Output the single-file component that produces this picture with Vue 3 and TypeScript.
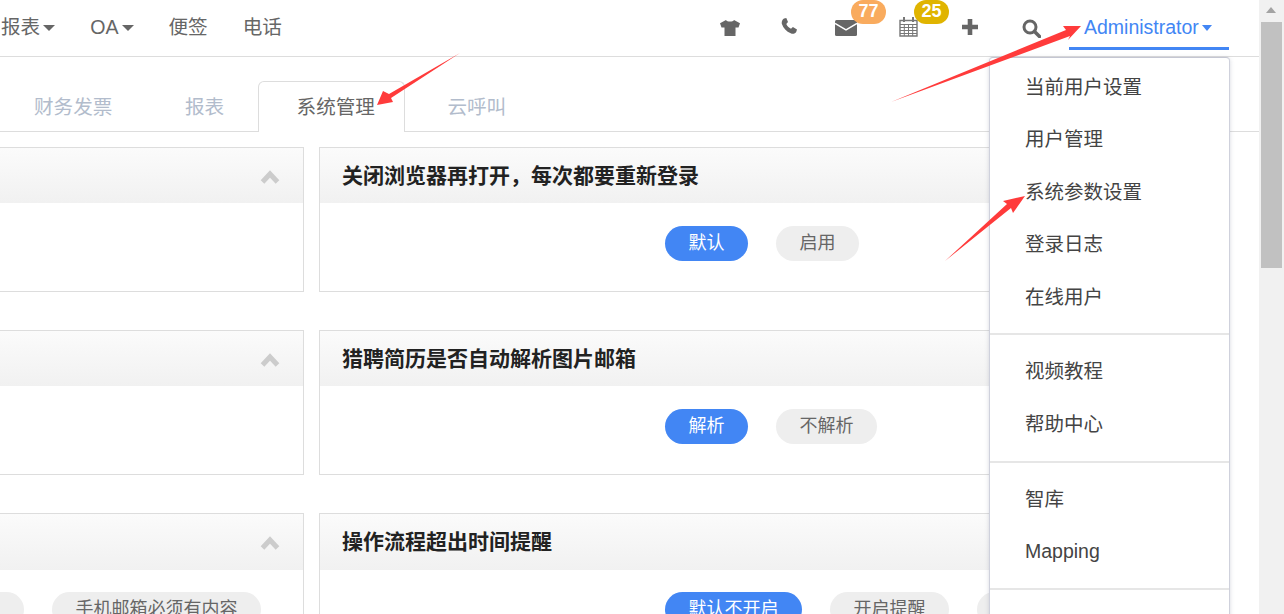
<script setup lang="ts">
interface Pill { text: string; active?: boolean }
interface Panel { title: string; pills: Pill[]; side: 'left' | 'right' }

const navLeft: { text: string; caret: boolean }[] = [
  { text: '报表', caret: true },
  { text: 'OA', caret: true },
  { text: '便签', caret: false },
  { text: '电话', caret: false },
]
const tabs: { text: string; active?: boolean }[] = [
  { text: '财务发票' },
  { text: '报表' },
  { text: '系统管理', active: true },
  { text: '云呼叫' },
]
const panels: Panel[] = [
  { side: 'left', title: '', pills: [] },
  { side: 'right', title: '关闭浏览器再打开，每次都要重新登录', pills: [{ text: '默认', active: true }, { text: '启用' }] },
  { side: 'left', title: '', pills: [] },
  { side: 'right', title: '猎聘简历是否自动解析图片邮箱', pills: [{ text: '解析', active: true }, { text: '不解析' }] },
  { side: 'left', title: '', pills: [{ text: '默认' }, { text: '手机邮箱必须有内容' }] },
  { side: 'right', title: '操作流程超出时间提醒', pills: [{ text: '默认不开启', active: true }, { text: '开启提醒' }, { text: '强制提醒' }] },
]
const menuGroups: string[][] = [
  ['当前用户设置', '用户管理', '系统参数设置', '登录日志', '在线用户'],
  ['视频教程', '帮助中心'],
  ['智库', 'Mapping'],
  ['退出登录'],
]
</script>

<template>
  <div class="page">
    <div class="main">
      <header class="topbar">
        <nav class="nav-left">
          <span v-for="n in navLeft" :key="n.text" class="nav-item">
            {{ n.text }}<i v-if="n.caret" class="caret"></i>
          </span>
        </nav>
        <div class="nav-right">
          <span class="icon-cell shirt">
            <svg width="20" height="16" viewBox="0 0 20 16"><path d="M6 0 0 3.200l1.500 4.300h3V16h11V7.500h3L20 3.200 14 0c-1 2-7 2-8 0Z" fill="#666"/></svg>
          </span>
          <span class="icon-cell phone">
            <svg width="16" height="16" viewBox="0 0 16 16"><path d="M3 .5 5.300 0 7 4 5.300 6c.9 2 2.400 3.600 4.700 4.700l1.900-1.700L16 11.500 15.200 14c-1 1.800-3.400 2.300-5.500 1.300C5.400 13.500 2.300 10 .9 6 .3 4 1.200 1.600 3 .5Z" fill="#666"/></svg>
          </span>
          <span class="icon-cell mail">
            <svg width="22" height="16" viewBox="0 0 22 16"><rect width="22" height="16" rx="1.500" fill="#666"/><path d="M0 3.500 11 10 22 3.500" fill="none" stroke="#fff" stroke-width="1.500"/></svg>
            <b class="badge orange">77</b>
          </span>
          <span class="icon-cell cal">
            <svg width="19" height="20" viewBox="0 0 19 20"><path d="M1 3.500h17v15.500H1Z" fill="#fff" stroke="#777" stroke-width="1.400"/><path d="M5 0v5M14 0v5" stroke="#777" stroke-width="2"/><path d="M1 7.500h17M1 10.500h17M1 13.500h17M1 16.500h17M5.300 7.500V19M9.500 7.500V19M13.700 7.500V19" stroke="#777"/></svg>
            <b class="badge gold">25</b>
          </span>
          <span class="icon-cell plus">
            <svg width="16" height="16" viewBox="0 0 16 16"><path d="M8 0v16M0 8h16" stroke="#666" stroke-width="4.600"/></svg>
          </span>
          <span class="icon-cell search">
            <svg width="19" height="19" viewBox="0 0 19 19"><circle cx="8" cy="8" r="6" fill="none" stroke="#666" stroke-width="3"/><path d="m12.500 12.500 5 5" stroke="#666" stroke-width="3.600" stroke-linecap="round"/></svg>
          </span>
          <span class="admin">Administrator<i class="caret blue"></i></span>
        </div>
      </header>

      <div class="tabs">
        <span v-for="t in tabs" :key="t.text" class="tab" :class="{ active: t.active }">{{ t.text }}</span>
      </div>

      <section class="grid">
        <article v-for="(p, i) in panels" :key="i" class="panel">
          <div class="panel-head">
            <h3 class="panel-title">{{ p.title }}</h3>
            <svg v-if="p.side === 'left'" class="chev" width="20" height="14" viewBox="0 0 20 14"><path d="M2.500 12 10 4 17.500 12" fill="none" stroke="#ccc" stroke-width="5"/></svg>
          </div>
          <div class="panel-body" :class="p.side">
            <span v-for="b in p.pills" :key="b.text" class="pill" :class="{ on: b.active }">{{ b.text }}</span>
          </div>
        </article>
      </section>

      <ul class="menu">
        <li v-for="(g, gi) in menuGroups" :key="gi" class="menu-group">
          <span v-for="m in g" :key="m" class="menu-item">{{ m }}</span>
        </li>
      </ul>
    </div>

    <aside class="scrollbar">
      <i class="sb-up"></i>
      <i class="sb-thumb"></i>
    </aside>

    <svg class="arrows" width="1284" height="614" viewBox="0 0 1284 614">
      <path d="M460 53 389 94 383 91 377 105 393 102 391 98Z" fill="#ff3b3b"/>
      <path d="M891 102 1066 30 1063 26 1081 26 1068 40 1070 36Z" fill="#ff3b3b"/>
      <path d="M945 261 1007 204 1003 201 1025 196 1013 213 1011 208Z" fill="#ff3b3b"/>
    </svg>
  </div>
</template>

<style scoped>
.page {
  position: relative;
  display: flex;
  width: 1284px;
  height: 614px;
  overflow: hidden;
  background: #fff;
  font-family: "Liberation Sans", "Noto Sans CJK SC", sans-serif;
  color: #666;
}
.main {
  position: relative;
  width: 1259px;
  flex: none;
}
.topbar {
  display: flex;
  justify-content: space-between;
  height: 56px;
  border-bottom: 1px solid #ddd;
}
.nav-left {
  display: flex;
  gap: 35px;
  padding: 13px 0 0 1px;
  font-size: 19.600px;
  line-height: 28px;
}
.nav-item { white-space: nowrap; }
.caret {
  display: inline-block;
  width: 0;
  height: 0;
  margin-left: 3px;
  vertical-align: 3px;
  border-left: 6px solid transparent;
  border-right: 6px solid transparent;
  border-top: 6px solid #666;
}
.caret.blue {
  margin-left: 3px;
  border-left-width: 5.500px;
  border-right-width: 5.500px;
  border-top-color: #4286f4;
}
.nav-right {
  display: flex;
  align-items: flex-start;
  padding-right: 30px;
}
.icon-cell {
  position: relative;
  display: block;
  line-height: 0;
}
.shirt { margin-top: 20px; }
.phone { margin: 18px 0 0 41px; }
.mail { margin: 20px 0 0 38px; }
.cal { margin: 17px 0 0 42px; }
.plus { margin: 19px 0 0 44px; }
.search { margin: 19px 0 0 44px; }
.badge {
  position: absolute;
  width: 35px;
  height: 24px;
  border-radius: 12px;
  color: #fff;
  font-size: 18px;
  font-weight: 700;
  line-height: 23px;
  text-align: center;
}
.badge.orange { left: 16px; top: -20px; background: #f9ab5e; }
.badge.gold { left: 15px; top: -17px; background: #e0b400; }
.admin {
  margin-left: 28px;
  width: 145px;
  height: 34px;
  padding: 13px 0 0 15px;
  border-bottom: 3px solid #4286f4;
  color: #4286f4;
  font-size: 19.500px;
  line-height: 28px;
  white-space: nowrap;
}
.tabs {
  display: flex;
  align-items: flex-end;
  width: calc(100% + 5px);
  height: 75px;
  margin-left: -5px;
  box-sizing: border-box;
  border-bottom: 1px solid #ddd;
  gap: 3px;
}
.tab {
  height: 50px;
  margin-bottom: -1px;
  padding: 0 29.500px 0 38px;
  border: 1px solid transparent;
  border-bottom: 0;
  border-radius: 6px 6px 0 0;
  color: #b2bccc;
  font-size: 19.600px;
  line-height: 50px;
  white-space: nowrap;
}
.tab.active {
  border-color: #ddd;
  background: #fff;
  color: #666;
}
.grid {
  display: grid;
  grid-template-columns: 307px 880px;
  column-gap: 15px;
  row-gap: 37.900px;
  margin: 15px 0 0 -3px;
}
.panel {
  height: 145.300px;
  border: 1px solid #ddd;
  box-sizing: border-box;
  background: #fff;
}
.panel-head {
  display: flex;
  align-items: center;
  justify-content: space-between;
  height: 55.200px;
  padding: 0 23px 0 22px;
  box-sizing: border-box;
  background: linear-gradient(#fbfbfb, #f1f1f1);
}
.panel-title {
  margin: 0;
  color: #222;
  font-size: 21px;
  font-weight: 700;
  line-height: 55px;
  white-space: nowrap;
}
.chev { margin: 3px 0 0 auto; }
.panel-body {
  display: flex;
  gap: 28px;
  padding-top: 22.800px;
}
.panel-body.right { padding-left: 345px; }
.panel-body.left { justify-content: flex-end; padding-right: 42px; }
.pill {
  height: 35px;
  padding: 0 23.500px;
  border-radius: 17.500px;
  background: #eee;
  color: #666;
  font-size: 18px;
  line-height: 34px;
  white-space: nowrap;
}
.pill.on {
  background: #4286f4;
  color: #fff;
}
.menu {
  position: absolute;
  top: 56.500px;
  left: 988.500px;
  width: 241.500px;
  height: 600px;
  margin: 0;
  padding: 3.500px 0 0 0.500px;
  box-sizing: border-box;
  list-style: none;
  border-radius: 4px 4px 0 0;
  background: #fff;
  border: 1px solid #cfd1dc;
  border-top-color: #c4c6d2;
  box-shadow: 0 1px 4px rgba(120, 125, 150, 0.3);
}
.menu-group {
  padding-bottom: 10.500px;
  margin-bottom: 10px;
  border-bottom: 2px solid #e6e6e6;
}
.menu-group:last-child { border-bottom: 0; }
.menu-item {
  display: block;
  height: 52.400px;
  padding-left: 35px;
  color: #444;
  font-size: 19.500px;
  line-height: 52.400px;
  white-space: nowrap;
}
.scrollbar {
  position: relative;
  flex: 1;
  background: #f1f1f1;
}
.sb-up {
  display: block;
  width: 0;
  height: 0;
  margin: 7px 0 0 7px;
  border-left: 5px solid transparent;
  border-right: 5px solid transparent;
  border-bottom: 6px solid #a3a3a3;
}
.sb-thumb {
  display: block;
  width: 21px;
  height: 246px;
  margin: 9px 0 0 2px;
  background: #c1c1c1;
}
.arrows {
  position: absolute;
  left: 0;
  top: 0;
  pointer-events: none;
}
</style>
